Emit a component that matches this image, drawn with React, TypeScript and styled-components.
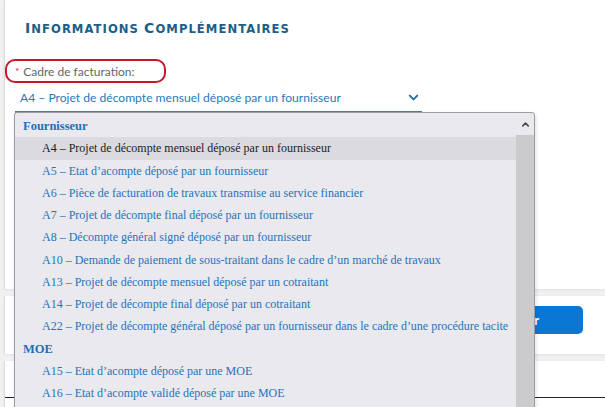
import React from 'react';
import styled, { createGlobalStyle } from 'styled-components';
import { ChevronDown, ChevronUp } from 'lucide-react';

const GlobalStyle = createGlobalStyle`
  html, body {
    margin: 0;
    padding: 0;
    background: #f1f1f2;
    overflow: hidden;
  }
  * {
    box-sizing: border-box;
  }
`;

const Page = styled.div`
  width: 605px;
  height: 407px;
  padding-left: 4px;
  display: flex;
  flex-direction: column;
  gap: 7px;
  font-family: Lato, "Open Sans", sans-serif;
`;

const Card = styled.section<{ $height: number }>`
  background: #fff;
  border-left: 1px solid #dcdcdc;
  box-shadow: 0 1px 3px rgba(0, 0, 0, 0.07);
  height: ${props => props.$height}px;
  flex-shrink: 0;
`;

const InfoCard = styled(Card)`
  padding: 17px 0 0 20px;
  position: relative;
  z-index: 2;
`;

const Title = styled.h2`
  margin: 0;
  font-family: "DejaVu Sans", Verdana, sans-serif;
  font-weight: 700;
  font-size: 11.6px;
  text-transform: uppercase;
  letter-spacing: 1.05px;
  color: #1b5e89;
  line-height: 22px;
`;

const Initial = styled.span`
  font-size: 14px;
`;

const Field = styled.div`
  margin-top: 19px;
  display: flex;
  flex-direction: column;
  align-items: flex-start;
`;

const LabelBox = styled.label`
  margin-left: -20px;
  width: 161px;
  height: 24px;
  border: 2px solid #c4172c;
  border-radius: 10px;
  padding-left: 8px;
  display: flex;
  align-items: center;
  font-size: 12px;
  color: #666;
`;

const Required = styled.span`
  color: #d0213a;
  font-size: 10px;
  margin-right: 4px;
  align-self: flex-start;
  margin-top: 4px;
`;

const SelectWrap = styled.div`
  position: relative;
  margin-left: -10px;
  margin-top: 5px;
  width: 407px;
  height: 25px;
  border-bottom: 2px solid #3f7fb3;
  display: flex;
  align-items: center;
  justify-content: space-between;
  padding: 0 1px 4px 5px;
`;

const SelectValue = styled.span`
  font-size: 12.1px;
  color: #2a78b8;
`;

const Listbox = styled.div`
  position: absolute;
  top: calc(100% + 1px);
  left: -1px;
  width: 521px;
  height: 300px;
  background: #e9e9ee;
  border: 1px solid #9c9ca2;
  border-radius: 3px;
  display: flex;
  overflow: hidden;
  box-shadow: 1px 2px 4px rgba(0, 0, 0, 0.12);
`;

const Options = styled.ul`
  list-style: none;
  margin: 0;
  padding: 2px 0 0;
  flex: 1;
`;

const Group = styled.li`
  height: 22.25px;
  line-height: 22.25px;
  padding-left: 8px;
  font-family: "Liberation Serif", "Times New Roman", serif;
  font-size: 12.5px;
  font-weight: 700;
  color: #2470b6;
`;

const Option = styled.li<{ $active?: boolean }>`
  height: 22.25px;
  line-height: 22.25px;
  padding-left: 27px;
  white-space: nowrap;
  font-family: "Liberation Serif", "Times New Roman", serif;
  font-size: 12px;
  color: ${props => (props.$active ? '#1c1c1c' : '#2673bd')};
  background: ${props => (props.$active ? '#dadadf' : 'transparent')};
`;

const Scrollbar = styled.div`
  width: 18px;
  display: flex;
  flex-direction: column;
`;

const ScrollButton = styled.div`
  height: 22px;
  display: flex;
  align-items: center;
  justify-content: center;
  color: #4a4a4a;
`;

const ScrollThumb = styled.div`
  flex: 1;
  background: #cbcbcd;
`;

const ActionCard = styled(Card)`
  display: flex;
  justify-content: flex-end;
  align-items: flex-start;
  padding: 10px 22px 0 0;
`;

const PrimaryButton = styled.button`
  width: 128px;
  height: 28px;
  border: none;
  border-radius: 5px;
  background: #0b77d5;
  color: #fff;
  font-family: Lato, sans-serif;
  font-weight: 700;
  font-size: 13px;
`;

const ListCard = styled(Card)`
  flex: 1;
  padding-top: 36px;
`;

const Rule = styled.div`
  height: 1px;
  background: #222;
`;

const supplierOptions = [
  'A4 – Projet de décompte mensuel déposé par un fournisseur',
  'A5 – Etat d’acompte déposé par un fournisseur',
  'A6 – Pièce de facturation de travaux transmise au service financier',
  'A7 – Projet de décompte final déposé par un fournisseur',
  'A8 – Décompte général signé déposé par un fournisseur',
  'A10 – Demande de paiement de sous-traitant dans le cadre d’un marché de travaux',
  'A13 – Projet de décompte mensuel déposé par un cotraitant',
  'A14 – Projet de décompte final déposé par un cotraitant',
  'A22 – Projet de décompte général déposé par un fournisseur dans le cadre d’une procédure tacite',
];

const moeOptions = [
  'A15 – Etat d’acompte déposé par une MOE',
  'A16 – Etat d’acompte validé déposé par une MOE',
];

const App: React.FC = () => {
  return (
    <>
      <GlobalStyle />
      <Page>
        <InfoCard $height={289}>
          <Title>
            <Initial>I</Initial>nformations <Initial>C</Initial>omplémentaires
          </Title>
          <Field>
            <LabelBox>
              <Required>*</Required>
              Cadre de facturation:
            </LabelBox>
            <SelectWrap>
              <SelectValue>{supplierOptions[0]}</SelectValue>
              <ChevronDown size={15} strokeWidth={3.2} color="#1f6fb2" />
              <Listbox>
                <Options>
                  <Group>Fournisseur</Group>
                  {supplierOptions.map((label, i) => (
                    <Option key={label} $active={i === 0}>{label}</Option>
                  ))}
                  <Group>MOE</Group>
                  {moeOptions.map(label => (
                    <Option key={label}>{label}</Option>
                  ))}
                </Options>
                <Scrollbar>
                  <ScrollButton>
                    <ChevronUp size={11} strokeWidth={3.5} />
                  </ScrollButton>
                  <ScrollThumb />
                </Scrollbar>
              </Listbox>
            </SelectWrap>
          </Field>
        </InfoCard>
        <ActionCard $height={58}>
          <PrimaryButton>Valider</PrimaryButton>
        </ActionCard>
        <ListCard $height={60}>
          <Rule />
        </ListCard>
      </Page>
    </>
  );
};

export default App;
